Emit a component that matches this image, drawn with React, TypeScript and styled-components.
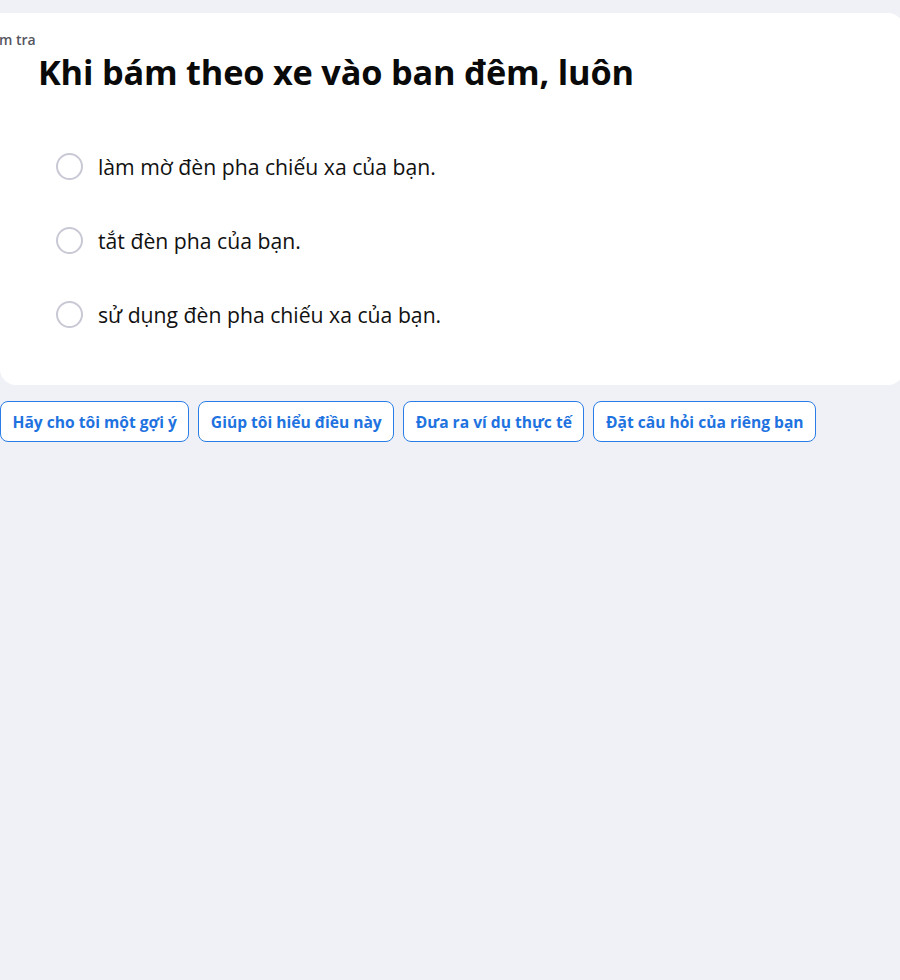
import React from "react";
import styled, { createGlobalStyle } from "styled-components";

const Global = createGlobalStyle`
  html, body { margin: 0; padding: 0; background: #f0f1f6; overflow: hidden; }
  body { font-family: "Open Sans", "Noto Sans", sans-serif; }
  * { box-sizing: border-box; }
`;

const Page = styled.div`
  width: 900px;
  height: 980px;
  padding-top: 13px;
  overflow: hidden;
`;

const Card = styled.section`
  width: 904px;
  height: 372px;
  background: #ffffff;
  border-radius: 0 16px 16px 16px;
  padding: 18px 0 0 0;
`;

const Label = styled.div`
  margin-left: -22px;
  font-size: 14px;
  font-weight: 600;
  color: #55555f;
  line-height: 18px;
`;

const Title = styled.h1`
  margin: 2px 0 0 38px;
  font-size: 34.3px;
  font-weight: 700;
  color: #0a0a0a;
  line-height: 42px;
  letter-spacing: -0.2px;
`;

const Options = styled.div`
  display: flex;
  flex-direction: column;
  gap: 46px;
  margin: 59px 0 0 56px;
`;

const Option = styled.label`
  display: flex;
  align-items: center;
  gap: 15px;
  height: 28px;
  font-size: 21.2px;
  color: #111;
  cursor: pointer;
`;

const Radio = styled.span`
  width: 27px;
  height: 27px;
  border-radius: 50%;
  border: 2px solid #c9c9d6;
  background: #fff;
  flex: none;
`;

const Actions = styled.div`
  display: flex;
  gap: 9px;
  margin-top: 16px;
`;

const Chip = styled.button`
  height: 41px;
  padding: 0 11.5px;
  border: 1px solid #2a7de6;
  border-radius: 8px;
  background: #fff;
  color: #1f73e0;
  font-family: "Open Sans", "Noto Sans", sans-serif;
  font-size: 15.6px;
  font-weight: 700;
  cursor: pointer;
`;

const options = [
  "làm mờ đèn pha chiếu xa của bạn.",
  "tắt đèn pha của bạn.",
  "sử dụng đèn pha chiếu xa của bạn.",
];

const chips = [
  "Hãy cho tôi một gợi ý",
  "Giúp tôi hiểu điều này",
  "Đưa ra ví dụ thực tế",
  "Đặt câu hỏi của riêng bạn",
];

export default function App() {
  return (
    <Page>
      <Global />
      <Card>
        <Label>Kiểm tra</Label>
        <Title>Khi bám theo xe vào ban đêm, luôn</Title>
        <Options>
          {options.map((o) => (
            <Option key={o}>
              <Radio />
              {o}
            </Option>
          ))}
        </Options>
      </Card>
      <Actions>
        {chips.map((c) => (
          <Chip key={c}>{c}</Chip>
        ))}
      </Actions>
    </Page>
  );
}
